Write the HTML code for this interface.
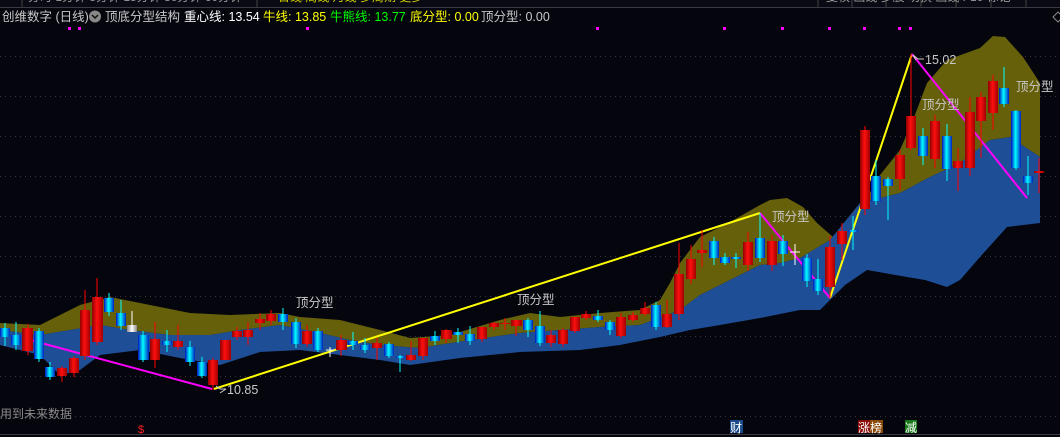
<!DOCTYPE html>
<html><head><meta charset="utf-8">
<style>
html,body{margin:0;padding:0;background:#05050e;overflow:hidden;}
svg{display:block;font-family:"Liberation Sans","Noto Sans CJK SC",sans-serif;}
</style></head><body>
<svg width="1060" height="437" viewBox="0 0 1060 437" xmlns="http://www.w3.org/2000/svg">
<defs>
<linearGradient id="r" x1="0" x2="1" y1="0" y2="0"><stop offset="0" stop-color="#900000"/><stop offset="0.45" stop-color="#ff1010"/><stop offset="1" stop-color="#a00000"/></linearGradient>
<linearGradient id="c" x1="0" x2="1" y1="0" y2="0"><stop offset="0" stop-color="#0010c0"/><stop offset="0.45" stop-color="#00ffff"/><stop offset="1" stop-color="#0020c0"/></linearGradient>
<linearGradient id="w" x1="0" x2="1" y1="0" y2="0"><stop offset="0" stop-color="#888"/><stop offset="0.5" stop-color="#fff"/><stop offset="1" stop-color="#888"/></linearGradient>
</defs>
<rect width="1060" height="437" fill="#05050e"/>
<!-- top strip -->
<rect x="0" y="0" width="1060" height="7" fill="#0a0a14"/>
<line x1="0" y1="7.5" x2="1060" y2="7.5" stroke="#3a3a44"/>
<g stroke="#444" stroke-width="1"><line x1="22" y1="0" x2="22" y2="7"/><line x1="257" y1="0" x2="257" y2="7"/><line x1="818" y1="0" x2="818" y2="7"/><line x1="852" y1="0" x2="852" y2="7"/><line x1="886" y1="0" x2="886" y2="7"/><line x1="921" y1="0" x2="921" y2="7"/><line x1="956" y1="0" x2="956" y2="7"/><line x1="991" y1="0" x2="991" y2="7"/><line x1="1026" y1="0" x2="1026" y2="7"/></g>
<g fill="#999" font-size="12"><text x="28" y="1">分时 1分钟 5分钟 15分钟 30分钟 60分钟</text><text x="826" y="1">复权 画线 多股 切换 画线 F10 标记</text></g>
<text x="278" y="1" fill="#cc0" font-size="12">日线 周线 月线 多周期 更多</text>
<!-- grid -->
<g stroke="#3a3a40" stroke-dasharray="1,4">
<line x1="0" y1="56.5" x2="1060" y2="56.5"/><line x1="0" y1="96.5" x2="1060" y2="96.5"/><line x1="0" y1="136.5" x2="1060" y2="136.5"/><line x1="0" y1="176.5" x2="1060" y2="176.5"/><line x1="0" y1="216.5" x2="1060" y2="216.5"/><line x1="0" y1="256.5" x2="1060" y2="256.5"/><line x1="0" y1="296.5" x2="1060" y2="296.5"/><line x1="0" y1="336.5" x2="1060" y2="336.5"/><line x1="0" y1="376.5" x2="1060" y2="376.5"/><line x1="0" y1="416.5" x2="1060" y2="416.5"/>
</g>
<!-- header -->
<text x="2" y="21" font-size="12.5" fill="#c8c8c8">创维数字 (日线)</text>
<circle cx="95" cy="16.5" r="6" fill="#888"/><path d="M92 15l3 3 3-3" stroke="#111" stroke-width="1.5" fill="none"/>
<text x="105" y="21" font-size="12.5" fill="#c8c8c8">顶底分型结构</text>
<text x="184" y="21" font-size="12.5" fill="#fff">重心线: 13.54</text>
<text x="263" y="21" font-size="12.5" fill="#ffff00">牛线: 13.85</text>
<text x="330" y="21" font-size="12.5" fill="#00ff00">牛熊线: 13.77</text>
<text x="410" y="21" font-size="12.5" fill="#ffff00">底分型: 0.00</text>
<text x="481" y="21" font-size="12.5" fill="#c8c8c8">顶分型: 0.00</text>
<g fill="#ff00ff"><rect x="68" y="27" width="3" height="3"/><rect x="78" y="27" width="3" height="3"/><rect x="306" y="27" width="3" height="3"/><rect x="596" y="27" width="3" height="3"/><rect x="723" y="27" width="3" height="3"/><rect x="781" y="27" width="3" height="3"/><rect x="828" y="27" width="3" height="3"/><rect x="863" y="27" width="3" height="3"/><rect x="898" y="27" width="3" height="3"/><rect x="909" y="27" width="3" height="3"/></g>
<path d="M1053 17l5-5 5 5-5 5z" fill="none" stroke="#888"/>
<!-- bands -->
<polygon fill="#66600a" points="0,323 40,325 80,305 110,297 150,305 190,313 230,315 280,313 300,317 340,320 380,330 410,338 450,335 500,320 530,313 560,317 600,313 640,310 660,300 670,283 680,263 700,237 730,222 760,205 770,200 787,198 803,207 817,223 833,237 848,222 860,210 880,175 900,150 913,120 927,83 947,60 980,48 993,36 1005,37 1023,57 1040,83 1040,157 1010,137 990,140 960,163 930,177 900,193 860,203 830,240 800,258 780,263 760,265 720,285 700,295 680,310 640,325 600,327 560,330 520,333 470,340 420,348 380,345 350,340 320,333 280,325 240,330 210,335 170,335 130,330 100,325 70,330 40,335 0,330"/>
<polygon fill="#1d4e96" points="0,330 40,335 70,330 100,325 130,330 170,335 210,335 240,330 280,325 320,333 350,340 380,345 420,348 470,340 520,333 560,330 600,327 640,325 680,310 700,295 720,285 760,265 780,263 800,258 830,240 860,203 900,193 930,177 960,163 990,140 1010,137 1040,157 1040,223 1007,227 980,257 960,280 947,287 925,280 907,277 867,270 845,285 830,300 820,310 800,310 760,318 720,325 690,330 660,337 620,345 580,350 520,352 460,358 410,365 380,360 340,355 300,350 260,352 220,365 180,358 140,350 100,355 80,370 60,375 40,355 0,345"/>
<!-- zigzag lines -->
<polyline fill="none" stroke="#ff00ff" stroke-width="2" points="30,340 212,389"/>
<polyline fill="none" stroke="#ffff00" stroke-width="2" points="214,389 760,213"/>
<polyline fill="none" stroke="#ff00ff" stroke-width="2" points="760,213 830,298"/>
<polyline fill="none" stroke="#ffff00" stroke-width="2" points="830,298 912,54"/>
<polyline fill="none" stroke="#ff00ff" stroke-width="2" points="912,54 1027,198"/>
<!-- candles -->
<g stroke-width="1">
<line x1="5" y1="323" x2="5" y2="346" stroke="#0ff"/><rect x="0" y="328" width="10" height="9" fill="url(#c)"/>
<line x1="16" y1="322" x2="16" y2="350" stroke="#0ff"/><rect x="11" y="335" width="10" height="10" fill="url(#c)"/>
<line x1="28" y1="324" x2="28" y2="355" stroke="#f00"/><rect x="22" y="328" width="11" height="23" fill="url(#r)"/>
<line x1="39" y1="328" x2="39" y2="362" stroke="#0ff"/><rect x="34" y="331" width="10" height="28" fill="url(#c)"/>
<line x1="50" y1="362" x2="50" y2="380" stroke="#0ff"/><rect x="45" y="367" width="10" height="10" fill="url(#c)"/>
<line x1="62" y1="366" x2="62" y2="382" stroke="#f00"/><rect x="57" y="368" width="10" height="8" fill="url(#r)"/>
<line x1="74" y1="356" x2="74" y2="377" stroke="#f00"/><rect x="69" y="358" width="10" height="15" fill="url(#r)"/>
<line x1="85" y1="290" x2="85" y2="360" stroke="#f00"/><rect x="80" y="310" width="10" height="46" fill="url(#r)"/>
<line x1="97" y1="278" x2="97" y2="345" stroke="#f00"/><rect x="92" y="297" width="11" height="45" fill="url(#r)"/>
<line x1="109" y1="293" x2="109" y2="316" stroke="#0ff"/><rect x="104" y="298" width="10" height="14" fill="url(#c)"/>
<line x1="121" y1="300" x2="121" y2="330" stroke="#0ff"/><rect x="116" y="313" width="10" height="13" fill="url(#c)"/>
<line x1="132" y1="311" x2="132" y2="332" stroke="#fff"/><rect x="127" y="325" width="10" height="7" fill="url(#w)"/>
<line x1="143" y1="331" x2="143" y2="362" stroke="#0ff"/><rect x="138" y="335" width="11" height="25" fill="url(#c)"/>
<line x1="155" y1="322" x2="155" y2="368" stroke="#f00"/><rect x="150" y="339" width="10" height="21" fill="url(#r)"/>
<line x1="167" y1="330" x2="167" y2="352" stroke="#0ff"/><rect x="162" y="341" width="10" height="4" fill="url(#c)"/>
<line x1="178" y1="325" x2="178" y2="350" stroke="#f00"/><rect x="173" y="341" width="10" height="6" fill="url(#r)"/>
<line x1="190" y1="341" x2="190" y2="366" stroke="#0ff"/><rect x="185" y="347" width="10" height="15" fill="url(#c)"/>
<line x1="202" y1="357" x2="202" y2="378" stroke="#0ff"/><rect x="197" y="362" width="10" height="14" fill="url(#c)"/>
<line x1="213" y1="358" x2="213" y2="390" stroke="#f00"/><rect x="208" y="360" width="10" height="25" fill="url(#r)"/>
<line x1="226" y1="340" x2="226" y2="360" stroke="#f00"/><rect x="220" y="340" width="11" height="20" fill="url(#r)"/>
<line x1="237" y1="327" x2="237" y2="340" stroke="#f00"/><rect x="232" y="331" width="10" height="6" fill="url(#r)"/>
<line x1="248" y1="322" x2="248" y2="345" stroke="#f00"/><rect x="243" y="330" width="10" height="7" fill="url(#r)"/>
<line x1="260" y1="313" x2="260" y2="330" stroke="#f00"/><rect x="255" y="319" width="10" height="4" fill="url(#r)"/>
<line x1="271" y1="310" x2="271" y2="325" stroke="#f00"/><rect x="266" y="314" width="10" height="7" fill="url(#r)"/>
<line x1="283" y1="308" x2="283" y2="330" stroke="#0ff"/><rect x="278" y="314" width="10" height="8" fill="url(#c)"/>
<line x1="296" y1="318" x2="296" y2="348" stroke="#0ff"/><rect x="291" y="322" width="10" height="22" fill="url(#c)"/>
<line x1="307" y1="325" x2="307" y2="347" stroke="#f00"/><rect x="302" y="331" width="10" height="13" fill="url(#r)"/>
<line x1="318" y1="328" x2="318" y2="352" stroke="#0ff"/><rect x="313" y="331" width="10" height="19" fill="url(#c)"/>
<line x1="330" y1="347" x2="330" y2="357" stroke="#fff"/><line x1="326" y1="350" x2="334" y2="350" stroke="#fff"/>
<line x1="341" y1="335" x2="341" y2="356" stroke="#f00"/><rect x="336" y="340" width="11" height="10" fill="url(#r)"/>
<line x1="353" y1="332" x2="353" y2="350" stroke="#0ff"/><rect x="348" y="341" width="10" height="4" fill="url(#c)"/>
<line x1="365" y1="338" x2="365" y2="353" stroke="#0ff"/><rect x="360" y="345" width="10" height="5" fill="url(#c)"/>
<line x1="377" y1="338" x2="377" y2="360" stroke="#f00"/><rect x="372" y="343" width="10" height="5" fill="url(#r)"/>
<line x1="389" y1="342" x2="389" y2="358" stroke="#0ff"/><rect x="384" y="344" width="10" height="12" fill="url(#c)"/>
<line x1="400" y1="355" x2="400" y2="372" stroke="#0ff"/><rect x="396" y="356" width="9" height="2" fill="url(#c)"/>
<line x1="411" y1="341" x2="411" y2="361" stroke="#f00"/><rect x="406" y="355" width="10" height="5" fill="url(#r)"/>
<line x1="423" y1="338" x2="423" y2="360" stroke="#f00"/><rect x="418" y="338" width="10" height="18" fill="url(#r)"/>
<line x1="435" y1="331" x2="435" y2="345" stroke="#0ff"/><rect x="430" y="336" width="10" height="5" fill="url(#c)"/>
<line x1="446" y1="329" x2="446" y2="343" stroke="#f00"/><rect x="441" y="330" width="11" height="9" fill="url(#r)"/>
<line x1="458" y1="328" x2="458" y2="343" stroke="#0ff"/><rect x="453" y="332" width="10" height="3" fill="url(#c)"/>
<line x1="470" y1="326" x2="470" y2="345" stroke="#0ff"/><rect x="465" y="334" width="10" height="7" fill="url(#c)"/>
<line x1="482" y1="327" x2="482" y2="342" stroke="#f00"/><rect x="477" y="327" width="10" height="12" fill="url(#r)"/>
<line x1="494" y1="322" x2="494" y2="330" stroke="#f00"/><rect x="489" y="323" width="10" height="4" fill="url(#r)"/>
<line x1="505" y1="318" x2="505" y2="330" stroke="#f00"/><rect x="500" y="323" width="10" height="1" fill="url(#r)"/>
<line x1="516" y1="320" x2="516" y2="336" stroke="#f00"/><rect x="511" y="320" width="11" height="6" fill="url(#r)"/>
<line x1="528" y1="318" x2="528" y2="337" stroke="#0ff"/><rect x="523" y="320" width="10" height="10" fill="url(#c)"/>
<line x1="540" y1="311" x2="540" y2="346" stroke="#0ff"/><rect x="535" y="326" width="10" height="17" fill="url(#c)"/>
<line x1="551" y1="330" x2="551" y2="347" stroke="#f00"/><rect x="546" y="335" width="10" height="8" fill="url(#r)"/>
<line x1="563" y1="328" x2="563" y2="347" stroke="#f00"/><rect x="558" y="330" width="10" height="14" fill="url(#r)"/>
<line x1="575" y1="317" x2="575" y2="333" stroke="#f00"/><rect x="570" y="317" width="10" height="14" fill="url(#r)"/>
<line x1="586" y1="311" x2="586" y2="320" stroke="#f00"/><rect x="581" y="314" width="10" height="4" fill="url(#r)"/>
<line x1="598" y1="310" x2="598" y2="322" stroke="#0ff"/><rect x="593" y="316" width="10" height="4" fill="url(#c)"/>
<line x1="610" y1="320" x2="610" y2="335" stroke="#0ff"/><rect x="605" y="322" width="10" height="8" fill="url(#c)"/>
<line x1="621" y1="313" x2="621" y2="338" stroke="#f00"/><rect x="616" y="317" width="10" height="19" fill="url(#r)"/>
<line x1="633" y1="312" x2="633" y2="322" stroke="#f00"/><rect x="628" y="315" width="10" height="5" fill="url(#r)"/>
<line x1="645" y1="302" x2="645" y2="316" stroke="#f00"/><rect x="640" y="308" width="10" height="6" fill="url(#r)"/>
<line x1="656" y1="302" x2="656" y2="330" stroke="#0ff"/><rect x="651" y="305" width="10" height="22" fill="url(#c)"/>
<line x1="667" y1="300" x2="667" y2="328" stroke="#f00"/><rect x="662" y="314" width="10" height="13" fill="url(#r)"/>
<line x1="679" y1="243" x2="679" y2="320" stroke="#f00"/><rect x="674" y="274" width="10" height="40" fill="url(#r)"/>
<line x1="691" y1="245" x2="691" y2="284" stroke="#f00"/><rect x="686" y="259" width="10" height="20" fill="url(#r)"/>
<line x1="702" y1="230" x2="702" y2="267" stroke="#f00"/><rect x="697" y="250" width="10" height="3" fill="url(#r)"/>
<line x1="714" y1="237" x2="714" y2="265" stroke="#0ff"/><rect x="709" y="241" width="10" height="17" fill="url(#c)"/>
<line x1="725" y1="253" x2="725" y2="265" stroke="#0ff"/><rect x="720" y="257" width="10" height="6" fill="url(#c)"/>
<line x1="736" y1="253" x2="736" y2="268" stroke="#0ff"/><rect x="731" y="257" width="10" height="2" fill="url(#c)"/>
<line x1="748" y1="232" x2="748" y2="271" stroke="#f00"/><rect x="743" y="242" width="10" height="23" fill="url(#r)"/>
<line x1="760" y1="213" x2="760" y2="262" stroke="#0ff"/><rect x="755" y="238" width="10" height="20" fill="url(#c)"/>
<line x1="772" y1="235" x2="772" y2="271" stroke="#f00"/><rect x="767" y="241" width="10" height="24" fill="url(#r)"/>
<line x1="783" y1="235" x2="783" y2="266" stroke="#0ff"/><rect x="778" y="241" width="10" height="13" fill="url(#c)"/>
<line x1="795" y1="244" x2="795" y2="265" stroke="#fff"/><line x1="790" y1="252" x2="800" y2="252" stroke="#fff"/>
<line x1="807" y1="254" x2="807" y2="287" stroke="#0ff"/><rect x="802" y="258" width="10" height="23" fill="url(#c)"/>
<line x1="818" y1="259" x2="818" y2="295" stroke="#0ff"/><rect x="813" y="279" width="10" height="12" fill="url(#c)"/>
<line x1="830" y1="236" x2="830" y2="298" stroke="#f00"/><rect x="825" y="247" width="10" height="40" fill="url(#r)"/>
<line x1="842" y1="223" x2="842" y2="260" stroke="#f00"/><rect x="837" y="231" width="10" height="13" fill="url(#r)"/>
<line x1="853" y1="216" x2="853" y2="250" stroke="#0ff"/><rect x="848" y="230" width="10" height="2" fill="url(#c)"/>
<line x1="865" y1="126" x2="865" y2="215" stroke="#f00"/><rect x="860" y="130" width="10" height="79" fill="url(#r)"/>
<line x1="876" y1="160" x2="876" y2="205" stroke="#0ff"/><rect x="871" y="176" width="10" height="25" fill="url(#c)"/>
<line x1="888" y1="177" x2="888" y2="220" stroke="#0ff"/><rect x="883" y="179" width="10" height="7" fill="url(#c)"/>
<line x1="900" y1="150" x2="900" y2="190" stroke="#f00"/><rect x="895" y="155" width="10" height="24" fill="url(#r)"/>
<line x1="911" y1="54" x2="911" y2="150" stroke="#f00"/><rect x="906" y="116" width="10" height="32" fill="url(#r)"/>
<line x1="923" y1="128" x2="923" y2="165" stroke="#0ff"/><rect x="918" y="136" width="10" height="20" fill="url(#c)"/>
<line x1="935" y1="115" x2="935" y2="168" stroke="#f00"/><rect x="930" y="121" width="10" height="38" fill="url(#r)"/>
<line x1="947" y1="124" x2="947" y2="181" stroke="#0ff"/><rect x="942" y="136" width="10" height="33" fill="url(#c)"/>
<line x1="958" y1="148" x2="958" y2="191" stroke="#f00"/><rect x="953" y="161" width="10" height="7" fill="url(#r)"/>
<line x1="970" y1="97" x2="970" y2="176" stroke="#f00"/><rect x="965" y="112" width="10" height="56" fill="url(#r)"/>
<line x1="981" y1="92" x2="981" y2="158" stroke="#f00"/><rect x="976" y="97" width="10" height="24" fill="url(#r)"/>
<line x1="993" y1="75" x2="993" y2="130" stroke="#f00"/><rect x="988" y="81" width="10" height="32" fill="url(#r)"/>
<line x1="1004" y1="67" x2="1004" y2="107" stroke="#0ff"/><rect x="999" y="88" width="10" height="16" fill="url(#c)"/>
<line x1="1016" y1="110" x2="1016" y2="170" stroke="#0ff"/><rect x="1011" y="111" width="10" height="57" fill="url(#c)"/>
<line x1="1028" y1="156" x2="1028" y2="195" stroke="#0ff"/><rect x="1023" y="176" width="10" height="7" fill="url(#c)"/>
<line x1="1039" y1="158" x2="1039" y2="193" stroke="#f00"/><rect x="1034" y="171" width="10" height="2" fill="url(#r)"/>
</g>
<!-- labels -->
<g font-size="12.5" fill="#c8c8c8">
<text x="296" y="307">顶分型</text>
<text x="517" y="304">顶分型</text>
<text x="772" y="221">顶分型</text>
<text x="922" y="109">顶分型</text>
<text x="1016" y="91">顶分型</text>
<text x="227" y="394">10.85</text>
<text x="925" y="64">15.02</text>
</g>
<path d="M226 389h-6l-4 -3M226 389l-6 4" stroke="#ccc" fill="none"/>
<path d="M924 59h-6l-5-4M913 55l3 5" stroke="#ccc" fill="none"/>
<!-- bottom -->
<text x="0" y="418" font-size="12" fill="#8a8a8a">用到未来数据</text>
<line x1="0" y1="434.5" x2="1060" y2="434.5" stroke="#3a3a44"/>
<text x="138" y="433" font-size="11" fill="#ff2020">$</text>
<rect x="730" y="420" width="13" height="13" fill="#1a4a8a"/><text x="730" y="432" font-size="12" fill="#fff">财</text>
<rect x="858" y="420" width="12" height="13" fill="#8a0a0a"/><text x="858" y="432" font-size="12" fill="#fff">涨</text>
<rect x="870" y="420" width="13" height="13" fill="#8a4a0a"/><text x="870" y="432" font-size="12" fill="#fff">榜</text>
<rect x="905" y="420" width="12" height="13" fill="#1a7a1a"/><text x="905" y="432" font-size="12" fill="#fff">减</text>
</svg>
</body></html>
